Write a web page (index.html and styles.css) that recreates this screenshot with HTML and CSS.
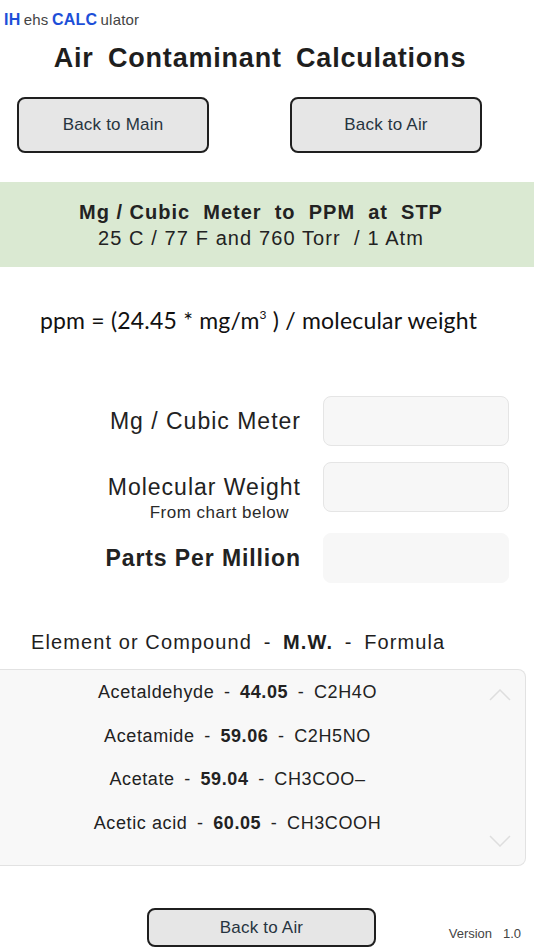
FILE: index.html
```html
<!DOCTYPE html>
<html lang="en">
<head>
    <meta charset="UTF-8">
    <meta name="viewport" content="width=device-width, initial-scale=1.0">
    <title>Air Contaminant Calculations</title>
    <link rel="stylesheet" href="styles.css">
</head>
<body>
    <div class="brand">
        <span class="brand-strong">IH</span> ehs <span class="brand-strong">CALC</span> ulator
    </div>

    <h1>Air Contaminant Calculations</h1>

    <div class="nav">
        <a class="button" href="#">Back to Main</a>
        <a class="button" href="#">Back to Air</a>
    </div>

    <div class="band">
        <div class="band-title">Mg / Cubic&nbsp; Meter&nbsp; to&nbsp; PPM&nbsp; at&nbsp; STP</div>
        <div class="band-sub">25 C / 77 F and 760 Torr&nbsp; / 1 Atm</div>
    </div>

    <div class="formula">ppm = (24.45 * mg/m<sup>3</sup> ) / molecular weight</div>

    <div class="form">
        <div class="form-row">
            <label class="field-label" for="mg">Mg / Cubic Meter</label>
            <input class="field" id="mg" type="text">
        </div>
        <div class="form-row form-row-top">
            <div class="field-label">
                <label for="mw">Molecular Weight</label>
                <div class="field-note">From chart below</div>
            </div>
            <input class="field" id="mw" type="text">
        </div>
        <div class="form-row form-row-last">
            <div class="field-label field-label-bold">Parts Per Million</div>
            <div class="field field-result"></div>
        </div>
    </div>

    <div class="chart-head">Element or Compound <span class="sep">-</span> <b>M.W.</b> <span class="sep">-</span> Formula</div>

    <div class="chart">
        <ul class="chart-list" id="chartList"></ul>
        <svg class="chevron chevron-up" width="22" height="12" viewBox="0 0 22 12">
            <polyline points="1,11 11,1 21,11" fill="none" stroke="#dedede" stroke-width="1.5"/>
        </svg>
        <svg class="chevron chevron-down" width="22" height="12" viewBox="0 0 22 12">
            <polyline points="1,1 11,11 21,1" fill="none" stroke="#dedede" stroke-width="1.5"/>
        </svg>
    </div>

    <div class="footer">
        <a class="button button-small" href="#">Back to Air</a>
        <div class="version">Version&nbsp;&nbsp; 1.0</div>
    </div>

    <script>
        // molecular weights shown in the chart
        const compounds = [
            ['Acetaldehyde', '44.05', 'C2H4O'],
            ['Acetamide', '59.06', 'C2H5NO'],
            ['Acetate', '59.04', 'CH3COO–'],
            ['Acetic acid', '60.05', 'CH3COOH'],
            ['Acetone', '58.08', 'C3H6O']
        ];

        const list = document.getElementById('chartList');
        compounds.forEach(c => {
            const li = document.createElement('li');
            li.innerHTML = `${c[0]} <span class="sep">-</span> <b>${c[1]}</b> <span class="sep">-</span> ${c[2]}`;
            list.appendChild(li);
        });
    </script>
</body>
</html>
```

FILE: styles.css
```css
body {
    font-family: "Liberation Sans", Arial, sans-serif;
    background-color: white;
    color: #222;
    margin: 0;
    padding: 0;
}

.brand {
    padding: 10px 4px 0;
    font-size: 15px;
    line-height: 20px;
    color: #444;
    word-spacing: -1px;
    letter-spacing: 0.2px;
}

.brand-strong {
    color: #1d4fd8;
    font-weight: bold;
    font-size: 16px;
}

h1 {
    margin: 12px 0 0;
    font-size: 27px;
    line-height: 32px;
    text-align: center;
    word-spacing: 6px;
    letter-spacing: 0.8px;
    padding-right: 14px;
    color: #1e1e1e;
}

.nav {
    display: flex;
    gap: 81px;
    padding-left: 17px;
    margin-top: 23px;
}

.button {
    display: flex;
    align-items: center;
    justify-content: center;
    box-sizing: border-box;
    width: 192px;
    height: 56px;
    background-color: #e6e6e6;
    border: 2px solid #1f1f1f;
    border-radius: 8px;
    color: #26343f;
    font-size: 17px;
    letter-spacing: 0.2px;
    text-decoration: none;
}

.band {
    margin-top: 29px;
    height: 85px;
    box-sizing: border-box;
    padding-top: 17px;
    background-color: #dae9d2;
    text-align: center;
    font-size: 20px;
    line-height: 26px;
    letter-spacing: 1px;
    color: #222;
}

.band-title {
    font-weight: bold;
    padding-right: 12px;
}

.band-sub {
    letter-spacing: 1.1px;
    padding-right: 12px;
}

.formula {
    margin-top: 40px;
    font-family: Lato, "Open Sans", sans-serif;
    font-size: 23px;
    line-height: 26px;
    letter-spacing: 0.2px;
    text-align: center;
    padding-right: 17px;
    color: #111;
}

.formula sup {
    font-size: 12px;
    vertical-align: 10px;
    line-height: 0;
}

.form {
    margin-top: 63px;
}

.form-row {
    display: flex;
    align-items: center;
}

.form-row-top {
    align-items: flex-start;
    margin-top: 16px;
}

.form-row-last {
    margin-top: 10px;
}

.field-label {
    width: 301px;
    text-align: right;
    font-size: 23px;
    line-height: 26px;
    letter-spacing: 1px;
    color: #222;
}

.form-row-top .field-label {
    padding-top: 12px;
}

.field-label-bold {
    font-weight: bold;
    letter-spacing: 0.9px;
}

.field-note {
    margin-top: 3px;
    padding-right: 12px;
    font-size: 17px;
    line-height: 20px;
    letter-spacing: 0.5px;
    color: #2a2a2a;
}

.field {
    box-sizing: border-box;
    width: 186px;
    height: 50px;
    margin-left: 22px;
    background-color: #f7f7f7;
    border: 1.5px solid #e5e5e5;
    border-radius: 8px;
    outline: none;
}

.field-result {
    border-color: #f7f7f7;
}

.chart-head {
    margin-top: 45px;
    padding-left: 31px;
    font-size: 20px;
    line-height: 28px;
    letter-spacing: 1.1px;
    color: #1e1e1e;
}

.sep {
    margin: 0 5px;
}

.chart {
    position: relative;
    margin-top: 13px;
    width: 526px;
    height: 197px;
    box-sizing: border-box;
    background-color: #f8f8f8;
    border: 1px solid #e2e2e2;
    border-left: none;
    border-radius: 0 8px 8px 0;
    overflow: hidden;
}

.chart-list {
    list-style: none;
    margin: 0;
    padding: 1px 50px 0 0;
    height: 189px;
    box-sizing: border-box;
    overflow: hidden;
}

.chart-list li {
    height: 43.5px;
    line-height: 43.5px;
    text-align: center;
    font-size: 18px;
    letter-spacing: 0.6px;
    color: #222;
    white-space: nowrap;
}

.chart-list .sep {
    margin: 0 4px;
}

.chevron {
    position: absolute;
    right: 14px;
}

.chevron-up {
    top: 19px;
}

.chevron-down {
    top: 165px;
}

.footer {
    display: flex;
    align-items: flex-end;
    margin-top: 42px;
    padding-left: 147px;
}

.button-small {
    width: 229px;
    height: 39px;
}

.version {
    margin-left: auto;
    padding-right: 13px;
    padding-bottom: 6px;
    font-size: 13px;
    color: #444;
}
```
